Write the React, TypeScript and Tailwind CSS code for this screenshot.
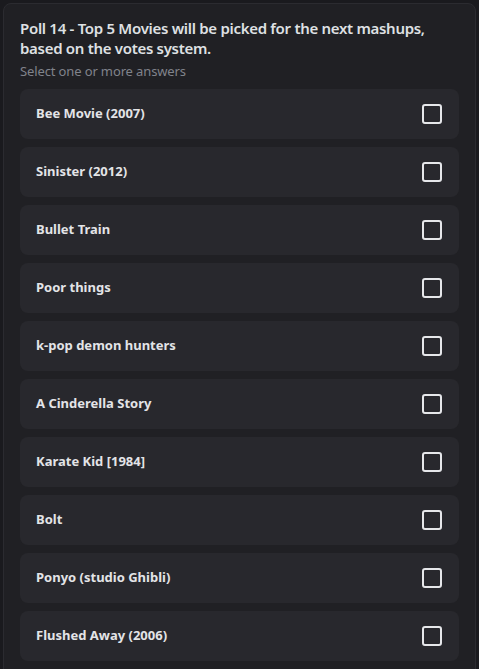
import { useState } from "react";

const answers = [
  "Bee Movie (2007)",
  "Sinister (2012)",
  "Bullet Train",
  "Poor things",
  "k-pop demon hunters",
  "A Cinderella Story",
  "Karate Kid [1984]",
  "Bolt",
  "Ponyo (studio Ghibli)",
  "Flushed Away (2006)",
];

export default function App() {
  const [picked, setPicked] = useState<Record<number, boolean>>({});

  return (
    <div className="h-[669px] overflow-hidden bg-[#1a1a1e] px-[3px] pt-[3px] font-['Noto_Sans',sans-serif]">
      <div className="rounded-lg border border-[#2b2b30] bg-[#202024] px-4 pt-[14px] pb-6">
        <h2 className="text-[15px] font-semibold leading-5 tracking-[-0.02em] text-[#dfe0e3]">
          Poll 14 - Top 5 Movies will be picked for the next mashups, based on the votes system.
        </h2>
        <p className="mt-[5px] text-[13px] leading-4 tracking-[-0.01em] text-[#80838b]">
          Select one or more answers
        </p>
        <ul className="mt-[10px] flex flex-col gap-2">
          {answers.map((a, i) => (
            <li key={a}>
              <button
                onClick={() => setPicked((p) => ({ ...p, [i]: !p[i] }))}
                className="flex h-[50px] w-full items-center justify-between rounded-lg bg-[#28282d] pl-4 pr-[17px] text-left"
              >
                <span className="text-[13px] font-bold text-[#e3e4e7]">{a}</span>
                <span
                  className={
                    picked[i]
                      ? "h-[20px] w-[20px] rounded-[3px] border-2 border-[#5865f2] bg-[#5865f2]"
                      : "h-[20px] w-[20px] rounded-[3px] border-2 border-[#e6e7ea]"
                  }
                />
              </button>
            </li>
          ))}
        </ul>
      </div>
    </div>
  );
}
